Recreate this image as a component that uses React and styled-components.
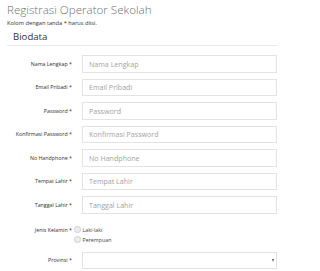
import React from "react";
import styled, { createGlobalStyle } from "styled-components";

const Global = createGlobalStyle`
  html, body { margin: 0; padding: 0; background: #fff; }
  body { font-family: "Open Sans", "Liberation Sans", sans-serif; color: #333; }
  * { box-sizing: border-box; }
`;

const Page = styled.div`
  padding: 2px 43px 0 7px;
  width: 320px;
`;

const Title = styled.h1`
  margin: 0;
  font-size: 11.6px;
  font-weight: 300;
  color: #6f6f6f;
  line-height: 16px;
`;

const Note = styled.p`
  margin: 1px 0 0;
  font-size: 5.7px;
  line-height: 8px;
  color: #333;
`;

const Legend = styled.h2`
  margin: 3px 0 0;
  padding: 0 0 2px 6px;
  font-size: 9.6px;
  font-weight: 400;
  line-height: 13px;
  color: #333;
  border-bottom: 1px solid #e8e8e8;
`;

const Form = styled.form`
  display: flex;
  flex-direction: column;
  gap: 6px;
  padding-top: 9px;
`;

const Row = styled.div`
  display: grid;
  grid-template-columns: 75px 195px;
  align-items: ${(p) => (p.$top ? "start" : "center")};
  padding-top: ${(p) => p.$pt || 0}px;
`;

const Label = styled.label`
  text-align: right;
  padding-right: 10px;
  font-size: 5.3px;
  line-height: ${(p) => p.$lh || 8}px;
  color: #2f2f2f;
  white-space: nowrap;
`;

const Input = styled.input`
  height: 17.5px;
  width: 195px;
  margin: 0;
  border: 1px solid #e3e3e3;
  border-radius: 0;
  padding: 0 6px;
  font-family: "Open Sans", "Liberation Sans", sans-serif;
  font-size: 7.1px;
  color: #555;
  outline: none;
  &::placeholder { color: #a3a3a3; }
`;

const RadioGroup = styled.div`
  display: flex;
  flex-direction: column;
  margin-left: -8px;
`;

const RadioItem = styled.label`
  display: flex;
  align-items: center;
  gap: 2px;
  height: 10px;
  font-size: 5.3px;
  color: #444;
`;

const Radio = styled.input.attrs({ type: "radio" })`
  appearance: none;
  margin: 0;
  width: 6.5px;
  height: 6.5px;
  border-radius: 50%;
  border: 1px solid #cfcfcf;
  background: #ececec;
`;

const SelectWrap = styled.div`
  position: relative;
  width: 195px;
`;

const Select = styled.select`
  appearance: none;
  display: block;
  width: 195px;
  height: 17px;
  margin: 0;
  border: 1px solid #e3e3e3;
  border-radius: 0;
  background: #fff;
  outline: none;
`;

const Arrow = styled.span`
  position: absolute;
  right: 3.5px;
  top: 7px;
  width: 0;
  height: 0;
  border-left: 1.5px solid transparent;
  border-right: 1.5px solid transparent;
  border-top: 3px solid #555;
`;

const fields = [
  "Nama Lengkap",
  "Email Pribadi",
  "Password",
  "Konfirmasi Password",
  "No Handphone",
  "Tempat Lahir",
  "Tanggal Lahir",
];

export default function App() {
  return (
    <>
      <Global />
      <Page>
        <Title>Registrasi Operator Sekolah</Title>
        <Note>Kolom dengan tanda * harus diisi.</Note>
        <Legend>Biodata</Legend>
        <Form>
          {fields.map((f) => (
            <Row key={f}>
              <Label>{f} *</Label>
              <Input
                placeholder={f}
                type={f.includes("Password") ? "password" : "text"}
              />
            </Row>
          ))}
          <Row $top $pt={5}>
            <Label $lh={10}>Jenis Kelamin *</Label>
            <RadioGroup>
              <RadioItem>
                <Radio name="jk" /> Laki-laki
              </RadioItem>
              <RadioItem>
                <Radio name="jk" /> Perempuan
              </RadioItem>
            </RadioGroup>
          </Row>
          <Row $pt={1}>
            <Label>Provinsi *</Label>
            <SelectWrap>
              <Select>
                <option value=""></option>
              </Select>
              <Arrow />
            </SelectWrap>
          </Row>
        </Form>
      </Page>
    </>
  );
}
